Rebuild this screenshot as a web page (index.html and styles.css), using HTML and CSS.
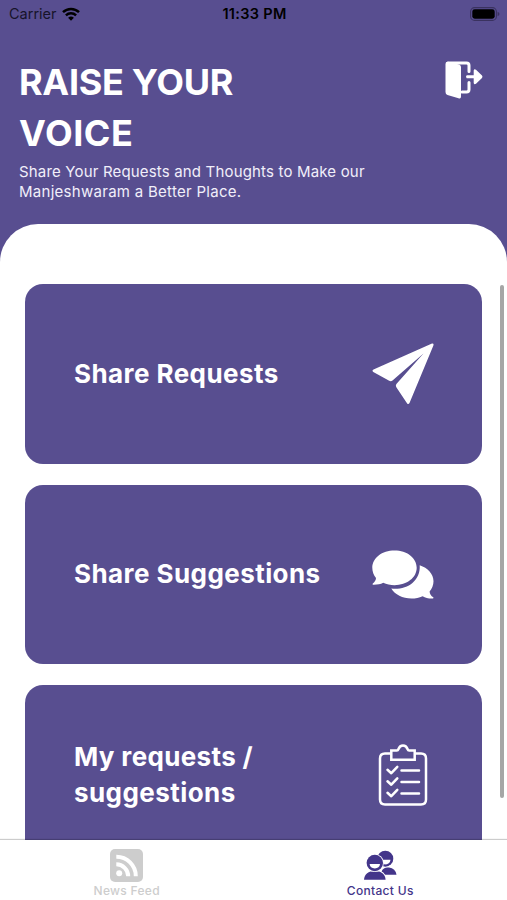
FILE: index.html
```html
<!DOCTYPE html>
<html lang="en">
<head>
    <meta charset="UTF-8">
    <meta name="viewport" content="width=device-width, initial-scale=1.0">
    <title>Raise Your Voice</title>
    <link rel="stylesheet" href="styles.css">
</head>
<body>
    <div class="screen">
        <div class="status-bar">
            <div class="carrier">
                <span>Carrier</span>
                <svg width="18" height="14" viewBox="0 0 18 14" fill="none" stroke="#000" stroke-width="2.5">
                    <path d="M1 5.2C5.5 .9 12.500 .9 17 5.200"/>
                    <path d="M3.900 8.300C6.800 5.600 11.200 5.600 14.100 8.300"/>
                    <path d="M9 13.700L6.100 10.700Q9 8.300 11.900 10.700Z" fill="#000" stroke="none"/>
                </svg>
            </div>
            <div class="time">11:33 PM</div>
            <div class="battery">
                <svg width="30" height="14" viewBox="0 0 30 14">
                    <rect x=".6" y=".6" width="25.800" height="12.800" rx="4" fill="none" stroke="#3a325f" stroke-width="1.100"/>
                    <rect x="2.300" y="2.300" width="22.400" height="9.400" rx="2.400"/>
                    <path d="M27.600 4.800Q29.500 5.600 29.500 7T27.600 9.200Z" fill="#3a325f"/>
                </svg>
            </div>
        </div>

        <header class="header">
            <div class="header-text">
                <h1><span class="line-raise">RAISE YOUR</span><br><span class="line-voice">VOICE</span></h1>
                <p><span class="line-share">Share Your Requests and Thoughts to Make our</span><br><span class="line-place">Manjeshwaram a Better Place.</span></p>
            </div>
            <svg class="logout" width="38" height="38" viewBox="0 0 38 38">
                <path d="M3 2H21.500Q24 2 24 4.500V10.500M24 21.500V28.500Q24 31 21.500 31H17" fill="none" stroke="#fff" stroke-width="3" stroke-linecap="round"/>
                <path d="M.5 3Q.5 .5 3 .8L14 3.400Q16 4 16 6V35.500Q16 38 13.500 37.200L2.500 34Q.5 33.300 .5 31Z" fill="#fff"/>
                <path d="M21.700 14.200H28.700V9.500Q29.200 7.500 31 8.800L37 14.500Q38 15.700 37 16.900L31 22.800Q29.200 24 28.700 22V17.300H21.700Q20.200 15.700 21.700 14.200Z" fill="#fff"/>
            </svg>
        </header>

        <main class="panel">
            <div class="card">
                <h2 class="share-requests">Share Requests</h2>
                <svg width="62" height="62" viewBox="0 0 62 62" fill="#fff">
                    <path d="M60 .5Q62.200 .2 61.300 2.700L37.500 60Q36.300 62 35 60.200L24.500 44.500Q23.200 42.500 24.600 40.700L51.500 10.500L20.500 37.400Q19 38.700 17.200 37.700L1.300 29Q-.5 27.700 1.500 26.500Z"/>
                </svg>
            </div>
            <div class="card">
                <h2 class="share-suggestions">Share Suggestions</h2>
                <svg width="62" height="49" viewBox="0 0 62 49.500" preserveAspectRatio="none" fill="#fff">
                    <path d="M22.500 .5C35 .5 44.700 8 44.700 18S35 35.500 22.500 35.500C18.500 35.500 14.500 34.700 11.200 33.200C8.500 34.700 5 35.300 1 35.200Q.1 34.700 .8 33.900C3 32 3.900 30.300 4 28.300C1.600 25.300 .3 21.800 .3 18C.3 8 10 .5 22.500 .5Z"/>
                    <path d="M47.700 15.300C55.800 18 61.500 24 61.500 31.500C61.500 35.500 60 38.800 57.600 41.800C57.700 44.200 59 46.300 61.300 47.700Q61.800 48.600 61 49C57 49.200 53.500 48.500 50.600 46.700C47.200 48.300 43.500 49 39.500 49C30.500 49 23 45.300 19.300 39C34 40.800 48.800 31.800 47.700 15.300Z"/>
                </svg>
            </div>
            <div class="card">
                <h2><span class="my-requests">My requests /</span><br><span class="suggestions">suggestions</span></h2>
                <svg width="62" height="62" viewBox="0 0 62 62" fill="none" stroke="#fff" stroke-width="2.500" stroke-linecap="round" stroke-linejoin="round">
                    <path d="M18.500 9.500H13Q8 9.500 8 14.500V55.500Q8 60.500 13 60.500H49Q54 60.500 54 55.500V14.500Q54 9.500 49 9.500H43.500"/>
                    <path d="M19.300 15.700V6.500H24.800Q26 6.500 26.500 5C27.300 2.700 28.700 1.500 31 1.500S34.700 2.700 35.500 5Q36 6.500 37.200 6.500H42.700V15.700Z" stroke-linejoin="miter"/>
                    <path d="M15.500 25.800L19.300 29.200L25.300 22.800M15.500 37.300L19.300 40.700L25.300 34.300M15.500 48.800L19.300 52.200L25.300 45.800"/>
                    <path d="M29.500 26.500H47M29.500 38H47M29.500 49.500H47"/>
                </svg>
            </div>
            <div class="scrollbar"></div>
        </main>

        <nav class="tab-bar">
            <div class="tab">
                <svg width="33" height="33" viewBox="0 0 33 33">
                    <rect width="33" height="33" rx="5" fill="#cdcdcd"/>
                    <circle cx="9.200" cy="24.200" r="3" fill="#fff"/>
                    <path d="M6.300 15.300A12 12 0 0 1 18.200 27.200M6.300 7.800A19.400 19.400 0 0 1 25.800 27.200" fill="none" stroke="#fff" stroke-width="4"/>
                </svg>
                <span class="news-feed">News Feed</span>
            </div>
            <div class="tab active">
                <svg width="33" height="33" viewBox="0 0 33 33">
                    <circle cx="21.300" cy="9.700" r="8" fill="#43358a"/>
                    <path d="M17 10.800H26.500Q26 15.500 20.500 15.500Z" fill="#fff"/>
                    <path d="M17 25.800C17.500 20 20 18.600 25 18.600Q31.500 19.500 32.500 25.800Z" fill="#43358a"/>
                    <path d="M0 30.800C.3 25 4.500 22 10.800 22S21.300 25 21.600 30.800Z" fill="#43358a" stroke="#fff" stroke-width="1.800" paint-order="stroke"/>
                    <circle cx="10.800" cy="14" r="9.100" fill="#fff"/>
                    <circle cx="10.800" cy="14" r="8.200" fill="#43358a"/>
                    <path d="M5.600 15H16Q15.500 19.400 10.800 19.400T5.600 15Z" fill="#fff"/>
                </svg>
                <span class="contact-us">Contact Us</span>
            </div>
        </nav>
    </div>
</body>
</html>
```
FILE: styles.css
```css
body {
    margin: 0;
    font-family: Inter, "Noto Sans", sans-serif;
    background-color: #584e90;
}

.screen {
    height: 900px;
    display: flex;
    flex-direction: column;
    overflow: hidden;
    background-color: #584e90;
}

svg {
    display: block;
    flex-shrink: 0;
}

h1, h2, p {
    margin: 0;
}

/* 상태 표시줄 */
.status-bar {
    display: grid;
    grid-template-columns: 1fr auto 1fr;
    align-items: center;
    height: 27px;
    padding: 0 7px 0 9px;
    box-sizing: border-box;
    font-size: 14.5px;
    color: #000;
    flex-shrink: 0;
}

.carrier {
    display: flex;
    align-items: center;
    gap: 5px;
    color: #17142a;
}

.time {
    font-weight: 600;
    letter-spacing: 0.3px;
}

.battery {
    display: flex;
    justify-content: flex-end;
}

.header {
    display: flex;
    justify-content: space-between;
    height: 197px;
    padding: 30px 24px 0 19px;
    box-sizing: border-box;
    color: #fff;
    flex-shrink: 0;
}

h1 {
    font-size: 36px;
    font-weight: 700;
    line-height: 51px;
    white-space: nowrap;
}

.line-raise {
    letter-spacing: -0.3px;
}

.line-voice {
    letter-spacing: 0.5px;
}

.header p {
    margin-top: 3px;
    font-size: 15px;
    line-height: 20px;
    white-space: nowrap;
    color: #f1effa;
}

.line-share {
    letter-spacing: 0.17px;
}

.line-place {
    letter-spacing: 0.28px;
}

.logout {
    margin-top: 4px;
}

.panel {
    position: relative;
    flex: 1;
    min-height: 0;
    display: flex;
    flex-direction: column;
    gap: 21px;
    padding: 60px 25px 0;
    overflow: hidden;
    background-color: #fff;
    border-radius: 38px 38px 0 0;
}

.card {
    display: flex;
    align-items: center;
    justify-content: space-between;
    height: 179.5px;
    padding: 0 48px 0 49px;
    box-sizing: border-box;
    flex-shrink: 0;
    color: #fff;
    background-color: #584e90;
    border-radius: 18px;
}

h2 {
    font-size: 26px;
    font-weight: 700;
    line-height: 36px;
    white-space: nowrap;
}

.share-requests,
.share-suggestions,
.suggestions {
    letter-spacing: 0.43px;
}

.my-requests {
    letter-spacing: 0.35px;
}

/* scroll indicator over the list */
.scrollbar {
    position: absolute;
    top: 61px;
    right: 3px;
    width: 4px;
    height: 513px;
    border-radius: 2px;
    background-color: #a6a6a6;
}

.tab-bar {
    position: relative;
    display: flex;
    height: 60px;
    flex-shrink: 0;
    background-color: #fff;
    box-shadow: 0 -1px 1px rgba(0, 0, 0, 0.2);
}

.tab {
    flex: 1;
    display: flex;
    flex-direction: column;
    align-items: center;
    padding-top: 9px;
    font-size: 12px;
    font-weight: 500;
    line-height: 18px;
    letter-spacing: 0.3px;
    color: #cdcdcd;
}

.tab.active {
    color: #43358a;
}
```
